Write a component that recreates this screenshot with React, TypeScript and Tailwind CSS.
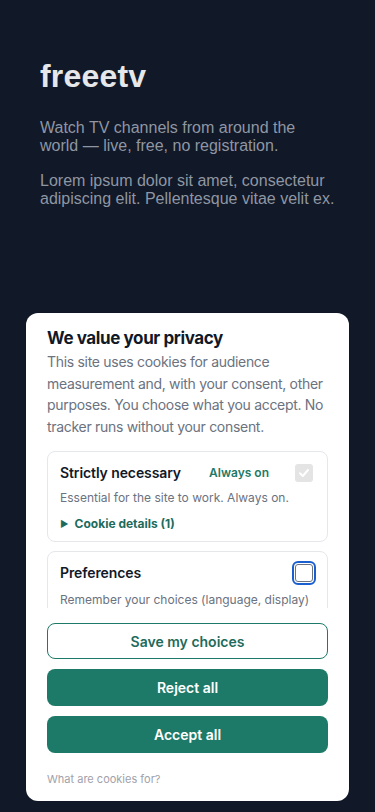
import React from "react";

export default function App() {
  return (
    <div className="h-[812px] w-[375px] flex flex-col bg-[#111827] overflow-hidden">
      <header className="px-10 pt-[58px] font-['Liberation_Sans',Arial,sans-serif]">
        <h1 className="text-[32px] leading-[1.15] font-bold text-[#e5e7eb] tracking-[0.2px]">freeetv</h1>
        <p className="mt-[24px] text-[16px] leading-[1.15] text-[#8f96a3]">
          Watch TV channels from around the world — live, free, no registration.
        </p>
        <p className="mt-[16px] text-[16px] leading-[1.15] text-[#8f96a3]">
          Lorem ipsum dolor sit amet, consectetur adipiscing elit. Pellentesque vitae velit ex.
        </p>
      </header>

      <div className="mt-auto mx-[26px] mb-[11px] h-[488px] bg-white rounded-[12px] flex flex-col font-['Inter',sans-serif] shadow-[0_0_0_1px_rgba(0,0,0,0.05)]">
        <div className="h-[295px] shrink-0 overflow-hidden px-[21px] pt-[14px]">
          <h2 className="text-[17px] leading-[22px] font-bold text-[#111827] tracking-[-0.4px]">We value your privacy</h2>
          <p className="mt-[2px] text-[14px] leading-[21.7px] text-[#6b7280] tracking-[-0.3px]">
            This site uses cookies for audience measurement and, with your consent, other purposes. You choose what you accept. No tracker runs without your consent.
          </p>

          <div className="mt-[13px] border border-[#e5e7eb] rounded-[8px] px-[12px] pt-[11px] pb-[8px]">
            <div className="flex items-center h-[20px]">
              <span className="flex-1 text-[14px] font-semibold text-[#111827] tracking-[-0.1px]">Strictly necessary</span>
              <span className="text-[12px] font-semibold text-[#1e7a68]">Always on</span>
              <span className="ml-[26px] mr-[2px] w-[18px] h-[18px] rounded-[3px] bg-[#e4e4e4] flex items-center justify-center">
                <svg width="12" height="12" viewBox="0 0 12 12" fill="none">
                  <path d="M2 6.3 L4.8 9 L10 3" stroke="white" strokeWidth="2" strokeLinecap="round" strokeLinejoin="round" />
                </svg>
              </span>
            </div>
            <p className="mt-[6px] text-[12px] leading-[18px] text-[#6b7280]">Essential for the site to work. Always on.</p>
            <div className="mt-[8px] flex items-center text-[12px] leading-[18px] font-bold text-[#1e6b5c]">
              <span className="text-[9px] mr-[6px]">▶</span>
              <span>Cookie details (1)</span>
            </div>
          </div>

          <div className="mt-[9px] border border-[#e5e7eb] rounded-[8px] px-[12px] pt-[11px] pb-[10px]">
            <div className="flex items-center h-[20px]">
              <span className="flex-1 text-[14px] font-semibold text-[#111827] tracking-[-0.1px]">Preferences</span>
              <span className="mr-[2px] w-[18px] h-[18px] rounded-[3px] border border-[#6b7280] bg-white outline-2 outline-offset-1 outline-[#1a5fd0]"></span>
            </div>
            <p className="mt-[8px] text-[12px] leading-[18px] text-[#6b7280]">
              Remember your choices (language, display) and your settings across visits.
            </p>
          </div>
        </div>

        <div className="flex-1 px-[21px] pt-[15px] flex flex-col">
          <div className="flex flex-col gap-[10px]">
            <button className="h-[36px] rounded-[8px] border border-[#1e7a68] bg-white text-[14px] font-semibold text-[#1e6b5c]">
              Save my choices
            </button>
            <button className="h-[37px] rounded-[8px] bg-[#1e7a68] text-[14px] font-semibold text-white">
              Reject all
            </button>
            <button className="h-[37px] rounded-[8px] bg-[#1e7a68] text-[14px] font-semibold text-white">
              Accept all
            </button>
          </div>
          <a className="mt-[18px] text-[11px] leading-[16px] text-[#a1a1aa]">What are cookies for?</a>
        </div>
      </div>
    </div>
  );
}
